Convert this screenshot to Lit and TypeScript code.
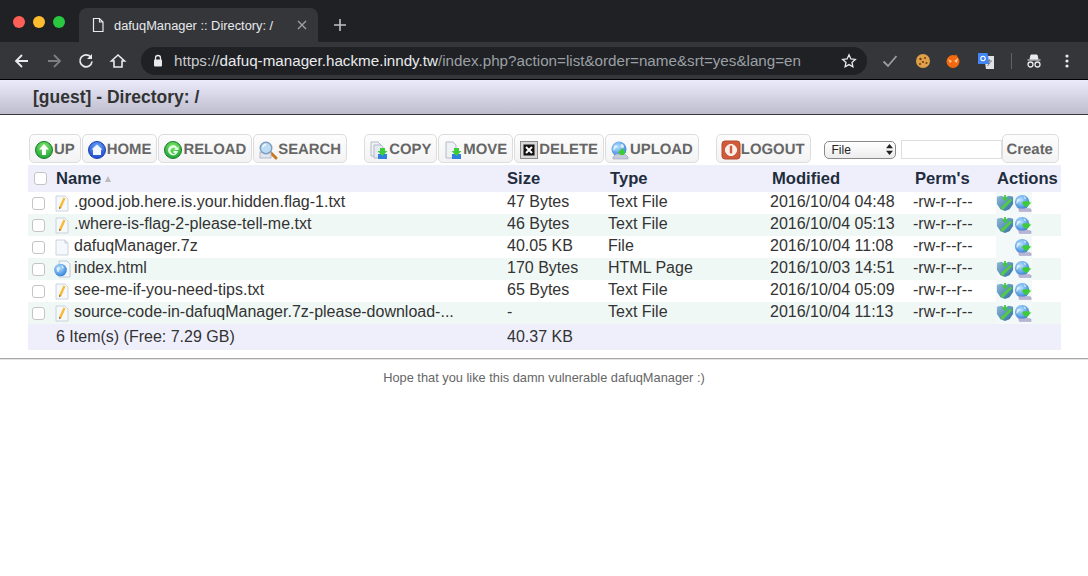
import { LitElement, html, svg, css } from 'lit';
import { customElement } from 'lit/decorators.js';

const ICONS = {
  up: svg`<circle cx="10" cy="10" r="8.5" fill="url(#gGreen)" stroke="#1a7a2a"/><path d="M10 4l5 5.500h-3V15H8V9.500H5z" fill="#fff"/>`,
  home: svg`<circle cx="10" cy="10" r="8.5" fill="url(#gBlue)" stroke="#1b47b8"/><path d="M10 4.500l5.500 5H14V15H6V9.500H4.500z" fill="#f2f6ff"/>`,
  reload: svg`<circle cx="10" cy="10" r="8.5" fill="url(#gGreen)" stroke="#1a7a2a"/><path d="M14.500 8A5 5 0 1 0 15 11h-4.500v2h2A3 3 0 1 1 12.500 8.500L11 10h4.500V5.500z" fill="#e8ffe8"/>`,
  search: svg`<path d="M12 12l6 6" stroke="#c77a22" stroke-width="3" stroke-linecap="round"/><rect x="2" y="12" width="11" height="6" fill="#e2e6ee" stroke="#a5adc0" stroke-width=".8"/><circle cx="8" cy="8" r="5.800" fill="#bcdcf5" stroke="#7d9dbd" stroke-width="1.400"/><path d="M5 7a3.500 3.500 0 0 1 3-2.500" stroke="#fff" stroke-width="1.300" fill="none"/>`,
  copy: svg`<path d="M2 2h7l3 3v11H2z" fill="#f0f2f6" stroke="#a4adbd" stroke-width=".8"/><path d="M5 5h7l2 2v11H5z" fill="#e6ebf3" stroke="#a4adbd" stroke-width=".8"/><rect x="9" y="14" width="9" height="5" fill="#2f7fe0"/><path d="M11 8h5v3h2.500l-5 5-5-5H11z" fill="#3ecb3a"/>`,
  move: svg`<path d="M3 2h7l3 3v13H3z" fill="#eef1f6" stroke="#a4adbd" stroke-width=".8"/><rect x="9" y="14" width="9" height="5" fill="#2f7fe0"/><path d="M11 8h5v3h2.500l-5 5-5-5H11z" fill="#3ecb3a"/>`,
  delete: svg`<rect x="1.500" y="1.500" width="17" height="17" fill="#d8d8d8" stroke="#8a8a8a"/><rect x="4.500" y="4.500" width="11" height="11" fill="#111"/><path d="M7 7l6 6m0-6l-6 6" stroke="#fff" stroke-width="2"/>`,
  upload: svg`<circle cx="9" cy="9" r="7.500" fill="url(#gGlobe)"/><path d="M4 6c3-2 4 1 2 2s-1 4-3 2m8-6c3 0 4 3 2 4s-3-2-2-4" fill="#e9f6ff" opacity=".85"/><path d="M3 17l3-3h9l3 3v2H3z" fill="#c5cbdc" stroke="#8e95ab" stroke-width=".5"/><path d="M12 8l4.500 5H14v2h-4v-2H7.500z" fill="#3ecb3a"/>`,
  logout: svg`<rect x="1" y="1" width="18" height="18" rx="3" fill="#cf5a3c" stroke="#b34a2f"/><circle cx="10" cy="10" r="5.500" fill="#fbeee6" stroke="#fff"/><rect x="8.800" y="5.500" width="2.400" height="8" rx="1" fill="#cf5a3c"/>`,
  txt: svg`<path d="M4 3h9l3 3v12H4z" fill="#f6f8fb" stroke="#c3c9d6" stroke-width=".8"/><path d="M7 14l4.500-9.500 2 1L9.300 15 7 16z" fill="#f5bb35"/><path d="M7 14v2l2.300-1z" fill="#8a6a30"/>`,
  file: svg`<path d="M4 3h9l3 3v12H4z" fill="#f5f8fc" stroke="#c3c9d6" stroke-width=".8"/><path d="M13 3v3h3" fill="#dde5f0" stroke="#c3c9d6" stroke-width=".8"/>`,
  page: svg`<path d="M7 2h8l3 3v13H7z" fill="#f5f8fc" stroke="#b5bccb" stroke-width=".8"/><circle cx="8.500" cy="11" r="6.300" fill="url(#gGlobe)"/><path d="M4.500 9c2-2 4 0 3 1s0 3-2 3m4-7c2 1 3 3 1 4" fill="#eaf6ff" opacity=".9"/>`,
  edit: svg`<path d="M1 3l5-1 4 2 4-2 5 1 0 8-4 6-5 2-5-2-4-6z" fill="url(#gShield)"/><path d="M9 1h2v3h2.500L10 8 6.500 4H9z" fill="#3ecb3a"/><path d="M5 15l11-10 2 2L7 18z" fill="#52cc44"/>`,
  download: svg`<circle cx="9" cy="9" r="8" fill="url(#gGlobe)"/><path d="M3.500 6c3-2 4 1 2 2s-1 4-3 2m8-7c3 0 3 2 2 3" fill="#e9f6ff" opacity=".85"/><path d="M5 16h12l2 1v2.500H6z" fill="#b8b4d8" stroke="#8e8ab0" stroke-width=".4"/><path d="M10 8h7v1.500h2.500L13.500 15 8 9.500h2z" fill="#3ecb3a"/>`,
};

type IconName = keyof typeof ICONS;

const FILES: [IconName, string, string, string, string, boolean][] = [
  ['txt', '.good.job.here.is.your.hidden.flag-1.txt', '47 Bytes', 'Text File', '2016/10/04 04:48', true],
  ['txt', '.where-is-flag-2-please-tell-me.txt', '46 Bytes', 'Text File', '2016/10/04 05:13', true],
  ['file', 'dafuqManager.7z', '40.05 KB', 'File', '2016/10/04 11:08', false],
  ['page', 'index.html', '170 Bytes', 'HTML Page', '2016/10/03 14:51', true],
  ['txt', 'see-me-if-you-need-tips.txt', '65 Bytes', 'Text File', '2016/10/04 05:09', true],
  ['txt', 'source-code-in-dafuqManager.7z-please-download-...', '-', 'Text File', '2016/10/04 11:13', true],
];

const icon = (name: IconName, size = 20) =>
  html`<svg class="ico" width=${size} height=${size} viewBox="0 0 20 20">${ICONS[name]}</svg>`;

@customElement('app-root')
export class AppRoot extends LitElement {
  static styles = css`
    :host {
      display: block;
      width: 1088px;
      height: 576px;
      overflow: hidden;
      background: #fff;
      font-family: 'Liberation Sans', Arial, sans-serif;
      color: #333;
    }
    .ico { display: block; flex: none; }
    .defs { display: block; width: 0; height: 0; }

    /* browser chrome */
    .tabstrip {
      height: 42px;
      box-sizing: border-box;
      background: #202124;
      display: flex;
      align-items: flex-end;
      padding-left: 13px;
    }
    .lights { display: flex; gap: 8px; align-self: flex-start; padding-top: 16px; width: 66px; }
    .lights i { width: 12px; height: 12px; border-radius: 50%; }
    .tab {
      width: 239px;
      height: 34px;
      box-sizing: border-box;
      background: #35363a;
      border-radius: 8px 8px 0 0;
      display: flex;
      align-items: center;
      padding: 0 10px 0 12px;
      color: #e8eaed;
      font-size: 12.85px;
    }
    .tab .title { margin-left: 9px; flex: 1; white-space: nowrap; }
    .plus { margin: 0 0 10px 15px; }
    .toolbar {
      height: 38px;
      box-sizing: border-box;
      background: #35363a;
      display: flex;
      align-items: center;
      padding-left: 13px;
      border-bottom: 1px solid #000;
    }
    .nav { display: flex; gap: 14px; width: 128px; flex: none; }
    .omni {
      width: 726px;
      height: 28px;
      box-sizing: border-box;
      border-radius: 14px;
      background: #202124;
      display: flex;
      align-items: center;
      padding: 0 10px 0 11px;
      font-size: 15.2px;
      color: #9aa0a6;
      white-space: nowrap;
    }
    .omni em { font-style: normal; color: #c8cacd; }
    .omni b { font-weight: 400; color: #e8eaed; }
    .omni .url { margin-left: 10px; flex: 1; }
    .ext { display: flex; align-items: center; margin-left: 15px; }
    .ext .m14 { margin-left: 14px; }
    .ext .m16 { margin-left: 16px; }
    .ext .m17 { margin-left: 17px; }
    .sep { width: 1px; height: 16px; background: #5f6368; }

    /* page header */
    .head {
      height: 35px;
      box-sizing: border-box;
      background: linear-gradient(#ebebfb, #bdbdcd);
      border-bottom: 1px solid #3a3a3a;
      padding: 0 0 0 33px;
      line-height: 35px;
      font-size: 17.5px;
      font-weight: 700;
      color: #333;
    }
    .main { padding: 19px 27px 0 28px; }

    /* action buttons */
    .actions { display: flex; align-items: center; height: 29px; padding-left: 1px; margin-bottom: 2px; }
    .group { display: flex; gap: 1px; margin-right: 17px; }
    .btn {
      display: flex;
      align-items: center;
      height: 29px;
      box-sizing: border-box;
      padding: 2px 5px 0 4px;
      border: 1px solid #ddd;
      border-radius: 5px;
      background: linear-gradient(#fdfdfd, #f3f3f3);
      font-size: 14.9px;
      text-rendering: geometricPrecision;
      font-weight: 700;
      color: #666;
      white-space: nowrap;
    }
    .select {
      width: 72px;
      height: 18px;
      box-sizing: border-box;
      margin: 2px 5px 0 -4px;
      padding: 0 2px 0 7px;
      display: flex;
      align-items: center;
      justify-content: space-between;
      border: 1px solid #8a8a8a;
      border-radius: 5px;
      background: linear-gradient(#fff, #ececec);
      font-size: 12px;
      color: #222;
    }
    .input {
      width: 101px;
      height: 19px;
      margin-top: 2px;
      box-sizing: border-box;
      border: 1px solid #ddd;
      background: #fff;
    }

    /* file table */
    .row {
      display: grid;
      grid-template-columns: 477px 101px 162px 143px 82px 1fr;
      align-items: center;
      height: 22px;
      box-sizing: border-box;
      font-size: 16px;
      color: #333;
      white-space: nowrap;
    }
    .row > span { padding-left: 2px; margin-bottom: 2px; }
    .row:nth-child(odd) { background: #f0f8f6; }
    .row .name { display: flex; align-items: center; padding-left: 4px; margin-bottom: 0; }
    .row .name .ico { margin: 0 2px 0 7px; }
    .row .name .text { margin-bottom: 2px; }
    .row.thead {
      height: 27px;
      background: #efeffc;
      font-weight: 700;
      font-size: 16.6px;
      color: #1f2d3d;
    }
    .thead > span { margin-bottom: 0; }
    .thead > span + span { padding-left: 4px; }
    .thead > span:nth-child(2) { padding-left: 2px; }
    .thead > .name { padding-left: 6px; }
    .thead > .name .label { margin-left: 9px; }
    .thead > .name svg { margin-left: 4px; }
    .check {
      flex: none;
      display: block;
      width: 11px;
      height: 11px;
      border: 1px solid #c4c4c4;
      border-radius: 3px;
      background: #fff;
    }
    .row > .tools {
      display: flex;
      align-items: center;
      justify-self: start;
      align-self: stretch;
      margin: 0 0 0 3px;
      padding-left: 0;
      background: #f3f9f8;
    }
    .tools .spacer { width: 18px; }
    .row.tfoot { height: 26px; background: #efeffc; }
    .tfoot > span { margin-bottom: 0; }
    .tfoot .count { padding-left: 28px; }
    .rule { height: 1px; margin-top: 8px; background: #a8a8a8; border-bottom: 1px solid #e4e4e4; }
    .foot {
      margin-top: 11px;
      text-align: center;
      font-size: 12.8px;
      line-height: 14px;
      color: #666;
    }
  `;

  render() {
    return html`
      <svg class="defs" aria-hidden="true">
        <defs>
          <radialGradient id="gGreen" cx=".5" cy=".3" r=".8"><stop offset="0" stop-color="#7fe86a"/><stop offset="1" stop-color="#109a30"/></radialGradient>
          <radialGradient id="gBlue" cx=".5" cy=".3" r=".8"><stop offset="0" stop-color="#6aa8ff"/><stop offset="1" stop-color="#1238c0"/></radialGradient>
          <radialGradient id="gGlobe" cx=".4" cy=".35" r=".8"><stop offset="0" stop-color="#b8e2ff"/><stop offset="1" stop-color="#1a6fd0"/></radialGradient>
          <linearGradient id="gShield" x1="0" y1="0" x2="1" y2="1"><stop offset="0" stop-color="#8fb8d8"/><stop offset="1" stop-color="#2f6f9f"/></linearGradient>
        </defs>
      </svg>
      <div class="tabstrip">
        <div class="lights">
          <i style="background:#ff5f57"></i><i style="background:#febc2e"></i><i style="background:#28c840"></i>
        </div>
        <div class="tab">
          <svg class="ico" width="14" height="16" viewBox="0 0 14 16"><path d="M2.500 1.500h6l3.500 3.500v9.500h-9.500zM8.500 1.500v3.500h3.500" fill="none" stroke="#e8eaed" stroke-width="1.200"/></svg>
          <span class="title">dafuqManager :: Directory: /</span>
          <svg class="ico" width="12" height="12" viewBox="0 0 12 12"><path d="M2 2l8 8m0-8l-8 8" stroke="#9aa0a6" stroke-width="1.400"/></svg>
        </div>
        <svg class="ico plus" width="14" height="14" viewBox="0 0 14 14"><path d="M7 1v12M1 7h12" stroke="#bdc1c6" stroke-width="1.600"/></svg>
      </div>
      <div class="toolbar">
        <div class="nav">
          <svg class="ico" width="18" height="18" viewBox="0 0 18 18"><path d="M15 9H3m6-6L3 9l6 6" fill="none" stroke="#e8eaed" stroke-width="1.800"/></svg>
          <svg class="ico" width="18" height="18" viewBox="0 0 18 18"><path d="M3 9h12M9 3l6 6-6 6" fill="none" stroke="#7b7e82" stroke-width="1.800"/></svg>
          <svg class="ico" width="18" height="18" viewBox="0 0 18 18"><path d="M14 5.500A6 6 0 1 0 15 9.500" fill="none" stroke="#e8eaed" stroke-width="1.700"/><path d="M15 2v5h-5z" fill="#e8eaed"/></svg>
          <svg class="ico" width="18" height="18" viewBox="0 0 18 18"><path d="M9 3L2.500 9H5v6h8V9h2.500z" fill="none" stroke="#e8eaed" stroke-width="1.600"/></svg>
        </div>
        <div class="omni">
          <svg class="ico" width="12" height="13" viewBox="0 0 12 13"><path d="M3.500 6V4a2.500 2.500 0 0 1 5 0v2" fill="none" stroke="#e8eaed" stroke-width="1.300"/><rect x="2" y="5.500" width="8" height="7" rx="1" fill="#e8eaed"/></svg>
          <span class="url"><em>https://</em><b>dafuq-manager.hackme.inndy.tw</b>/index.php?action=list&amp;order=name&amp;srt=yes&amp;lang=en</span>
          <svg class="ico" width="16" height="16" viewBox="0 0 16 16"><path d="M8 1.800l1.900 4.100 4.400.5-3.300 3 .9 4.400L8 11.600l-3.900 2.200.9-4.400-3.300-3 4.400-.5z" fill="none" stroke="#e8eaed" stroke-width="1.300"/></svg>
        </div>
        <div class="ext">
          <svg class="ico" width="16" height="14" viewBox="0 0 16 14"><path d="M1.500 7.500L6 12 14.500 2" fill="none" stroke="#9a9da1" stroke-width="1.800"/></svg>
          <svg class="ico m17" width="16" height="16" viewBox="0 0 16 16"><circle cx="8" cy="8" r="7" fill="#e0a04a"/><circle cx="5.500" cy="6" r="1.200" fill="#6e3d10"/><circle cx="10" cy="5" r="1" fill="#6e3d10"/><circle cx="8" cy="9" r="1.100" fill="#6e3d10"/><circle cx="11.500" cy="10" r="1" fill="#6e3d10"/><circle cx="5" cy="11" r="1" fill="#6e3d10"/></svg>
          <svg class="ico m14" width="16" height="16" viewBox="0 0 16 16"><circle cx="8" cy="8.500" r="6.500" fill="#f26a0f"/><path d="M3 6l4 2-2 2zm10-1l-4 3 3 2z" fill="#ffc48a"/><path d="M11 1l2 4-3-1z" fill="#f26a0f"/></svg>
          <svg class="ico m16" width="18" height="18" viewBox="0 0 18 18"><path d="M7 4h10v13H9z" fill="#dfe3e8"/><path d="M1 1h9.500l2 11H1z" fill="#4285f4"/><circle cx="6" cy="6.500" r="2.200" fill="none" stroke="#fff" stroke-width="1.100"/><path d="M10 9h5m-2.500-1.500V9m-2 5l3-4" stroke="#777" fill="none"/></svg>
          <span class="sep m16"></span>
          <svg class="ico m14" width="16" height="16" viewBox="0 0 16 16"><path d="M5 2h6l1 4H4zM1.500 7h13" fill="#e8eaed" stroke="#e8eaed"/><circle cx="4.500" cy="11.500" r="2.500" fill="none" stroke="#e8eaed" stroke-width="1.300"/><circle cx="11.500" cy="11.500" r="2.500" fill="none" stroke="#e8eaed" stroke-width="1.300"/></svg>
          <svg class="ico m17" width="16" height="16" viewBox="0 0 16 16"><circle cx="8" cy="3" r="1.600" fill="#e8eaed"/><circle cx="8" cy="8" r="1.600" fill="#e8eaed"/><circle cx="8" cy="13" r="1.600" fill="#e8eaed"/></svg>
        </div>
      </div>

      <div class="head">[guest] - Directory: /</div>

      <div class="main">
        <div class="actions">
          <div class="group">
            ${this.button('up', 'UP')}${this.button('home', 'HOME')}${this.button('reload', 'RELOAD')}${this.button('search', 'SEARCH')}
          </div>
          <div class="group">
            ${this.button('copy', 'COPY')}${this.button('move', 'MOVE')}${this.button('delete', 'DELETE')}${this.button('upload', 'UPLOAD')}
          </div>
          <div class="group">${this.button('logout', 'LOGOUT')}</div>
          <div class="select">
            File
            <svg class="ico" width="7" height="11" viewBox="0 0 7 11"><path d="M3.500 0L7 4.300H0zM3.500 11L0 6.700h7z" fill="#222"/></svg>
          </div>
          <div class="input"></div>
          <div class="btn">Create</div>
        </div>
        <div class="table">
          <div class="row thead">
            <span class="name">
              <i class="check"></i><span class="label">Name</span>
              <svg width="6" height="6" viewBox="0 0 6 6"><path d="M3 0l3 6H0z" fill="#bbb"/></svg>
            </span>
            <span>Size</span><span>Type</span><span>Modified</span><span>Perm's</span><span>Actions</span>
          </div>
          ${FILES.map(
            ([kind, name, size, type, date, editable]) => html`
              <div class="row">
                <span class="name"><i class="check"></i>${icon(kind)}<span class="text">${name}</span></span>
                <span>${size}</span>
                <span>${type}</span>
                <span>${date}</span>
                <span>-rw-r--r--</span>
                <span class="tools">
                  ${editable ? icon('edit', 18) : html`<i class="spacer"></i>`}${icon('download', 18)}
                </span>
              </div>
            `
          )}
          <div class="row tfoot">
            <span class="count">6 Item(s) (Free: 7.29 GB)</span>
            <span>40.37 KB</span>
          </div>
        </div>
      </div>
      <div class="rule"></div>
      <div class="foot">Hope that you like this damn vulnerable dafuqManager :)</div>
    `;
  }

  private button(name: IconName, label: string) {
    return html`<div class="btn">${icon(name)}${label}</div>`;
  }
}
